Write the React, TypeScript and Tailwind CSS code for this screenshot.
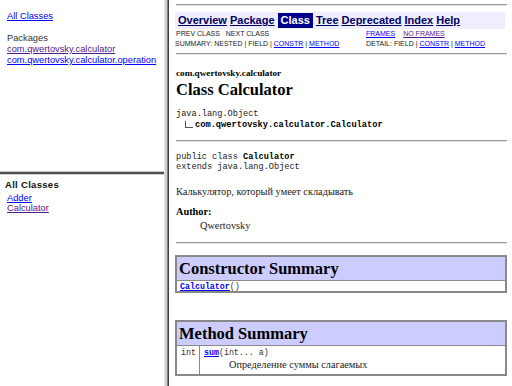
import React from "react";

const sans = "font-['Liberation_Sans',Arial,sans-serif]";
const serif = "font-['Liberation_Serif','Times_New_Roman',serif]";
const mono = "font-['Liberation_Mono','Courier_New',monospace]";

function Hr({ className = "" }: { className?: string }) {
  return <div className={"border-t border-[#9a9a9a] border-b border-b-[#e4e4e4] " + className} />;
}

export default function App() {
  return (
    <div className={"flex w-[512px] h-[386px] bg-white overflow-hidden text-black " + sans}>
      {/* Left frames */}
      <div className="w-[164px] flex flex-col shrink-0">
        <div className="h-[171px] pt-[11px] pl-[7px] text-[9.3px] leading-[11px]">
          <a className="text-[#0000ff] underline">All Classes</a>
          <div className="mt-[11px] text-[#333]">Packages</div>
          <div>
            <a className="text-[#551a8b] underline">com.qwertovsky.calculator</a>
          </div>
          <div>
            <a className="text-[#0000ff] underline">com.qwertovsky.calculator.operation</a>
          </div>
        </div>
        <div className="h-[1px] bg-[#c8c8c8]" />
        <div className="h-[2px] bg-[#505050]" />
        <div className="h-[1px] bg-[#d4d0c8]" />
        <div className="flex-1 pt-[5px] text-[9.3px] leading-[10.5px]">
          <div className="pl-[5px] font-bold text-[9.5px] tracking-[0.3px] text-[#111]">All Classes</div>
          <div className="pl-[7px] mt-[2px]">
            <a className="text-[#0000ff] underline">Adder</a>
          </div>
          <div className="pl-[7px]">
            <a className="text-[#551a8b] underline">Calculator</a>
          </div>
        </div>
      </div>

      {/* Divider */}
      <div className="flex shrink-0">
        <div className="w-[1px] bg-[#e8e8e8]" />
        <div className="w-[2px] bg-[#d4d0c8]" />
        <div className="w-[1px] bg-[#808080]" />
        <div className="w-[1px] bg-[#404040]" />
      </div>

      {/* Right frame */}
      <div className="flex-1 flex flex-col pl-[6px] pr-[5px]">
        <Hr className="mt-[4px] ml-[1px]" />
        <div className="mt-[6px] h-[17px] bg-[#eeeeff] mr-[2px] flex items-center pl-[3px] gap-[3px] text-[11px] font-bold">
          <span className="underline text-[#000060]">Overview</span>
          <span className="underline text-[#000060]">Package</span>
          <span className="bg-[#00008b] text-white px-[3px] h-[15px] flex items-center">Class</span>
          <span className="underline text-[#000060]">Tree</span>
          <span className="underline text-[#000060]">Deprecated</span>
          <span className="underline text-[#000060]">Index</span>
          <span className="underline text-[#000060]">Help</span>
        </div>
        <div className="flex h-[10px] items-center text-[7px] pl-[1px]">
          <div className="w-[190px] text-[#222]">PREV CLASS&nbsp;&nbsp;&nbsp;NEXT CLASS</div>
          <div className="flex gap-[8px]">
            <a className="text-[#0000ff] underline">FRAMES</a>
            <a className="text-[#551a8b] underline">NO FRAMES</a>
          </div>
        </div>
        <div className="flex h-[10px] items-center text-[7px] text-[#222]">
          <div className="w-[191px]">
            SUMMARY: NESTED | FIELD | <a className="text-[#0000ff] underline">CONSTR</a> |{" "}
            <a className="text-[#0000ff] underline">METHOD</a>
          </div>
          <div>
            DETAIL: FIELD | <a className="text-[#0000ff] underline">CONSTR</a> |{" "}
            <a className="text-[#0000ff] underline">METHOD</a>
          </div>
        </div>
        <Hr className="mt-[4px] ml-[1px]" />

        <div className={"mt-[12px] pl-[1px] text-[9.2px] leading-[12px] font-bold " + serif}>
          com.qwertovsky.calculator
        </div>
        <div className={"pl-[1px] text-[16.5px] leading-[21px] font-bold " + serif}>Class Calculator</div>

        <div className={"mt-[9px] pl-[1px] text-[8.6px] leading-[11px] text-[#222] " + mono}>java.lang.Object</div>
        <div className={"flex items-center h-[11px] pl-[10px] text-[8.7px] font-bold " + mono}>
          <div className="w-[8px] h-[7px] border-l border-b border-[#555] mb-[3px] mr-[2px]" />
          com.qwertovsky.calculator.Calculator
        </div>
        <Hr className="mt-[9px] ml-[1px]" />

        <div className={"mt-[10px] pl-[1px] text-[8.6px] leading-[10px] text-[#222] " + mono}>
          public class <b className="text-black">Calculator</b>
        </div>
        <div className={"pl-[1px] text-[8.6px] leading-[10px] text-[#222] " + mono}>extends java.lang.Object</div>

        <div className={"mt-[14px] pl-[1px] text-[10.3px] leading-[12px] text-[#222] " + serif}>
          Калькулятор, который умеет складывать
        </div>
        <div className={"mt-[8px] pl-[1px] text-[10.3px] leading-[12px] font-bold " + serif}>Author:</div>
        <div className={"mt-[2px] pl-[25px] text-[10.3px] leading-[12px] text-[#222] " + serif}>Qwertovsky</div>
        <Hr className="mt-[10px] ml-[1px]" />

        {/* Constructor Summary */}
        <div className="mt-[11px] border-2 border-[#888]">
          <div className={"h-[24px] bg-[#ccccff] border-b border-[#888] flex items-center pl-[2px] pt-[2px] text-[16.5px] font-bold " + serif}>
            Constructor Summary
          </div>
          <div className={"h-[10px] flex items-start pl-[3px] pt-[1px] text-[8.3px] leading-[9px] " + mono}>
            <a className="text-[#0000ff] underline font-bold">Calculator</a>
            <span className="text-[#333]">()</span>
          </div>
        </div>

        {/* Method Summary */}
        <div className="mt-[27px] border-2 border-[#888]">
          <div className={"h-[24px] bg-[#ccccff] border-b border-[#888] flex items-center pl-[2px] pt-[2px] text-[16.5px] font-bold " + serif}>
            Method Summary
          </div>
          <div className="flex h-[28px]">
            <div className={"w-[23px] border-r border-[#888] text-right pr-[3px] pt-[2px] text-[8.3px] leading-[10px] text-[#333] " + mono}>
              int
            </div>
            <div className="pl-[4px] pt-[2px]">
              <div className={"text-[8.3px] leading-[10px] text-[#333] " + mono}>
                <a className="text-[#0000ff] underline font-bold">sum</a>(int... a)
              </div>
              <div className={"pl-[25px] text-[10.3px] leading-[13px] text-[#222] " + serif}>
                Определение суммы слагаемых
              </div>
            </div>
          </div>
        </div>
      </div>
    </div>
  );
}
